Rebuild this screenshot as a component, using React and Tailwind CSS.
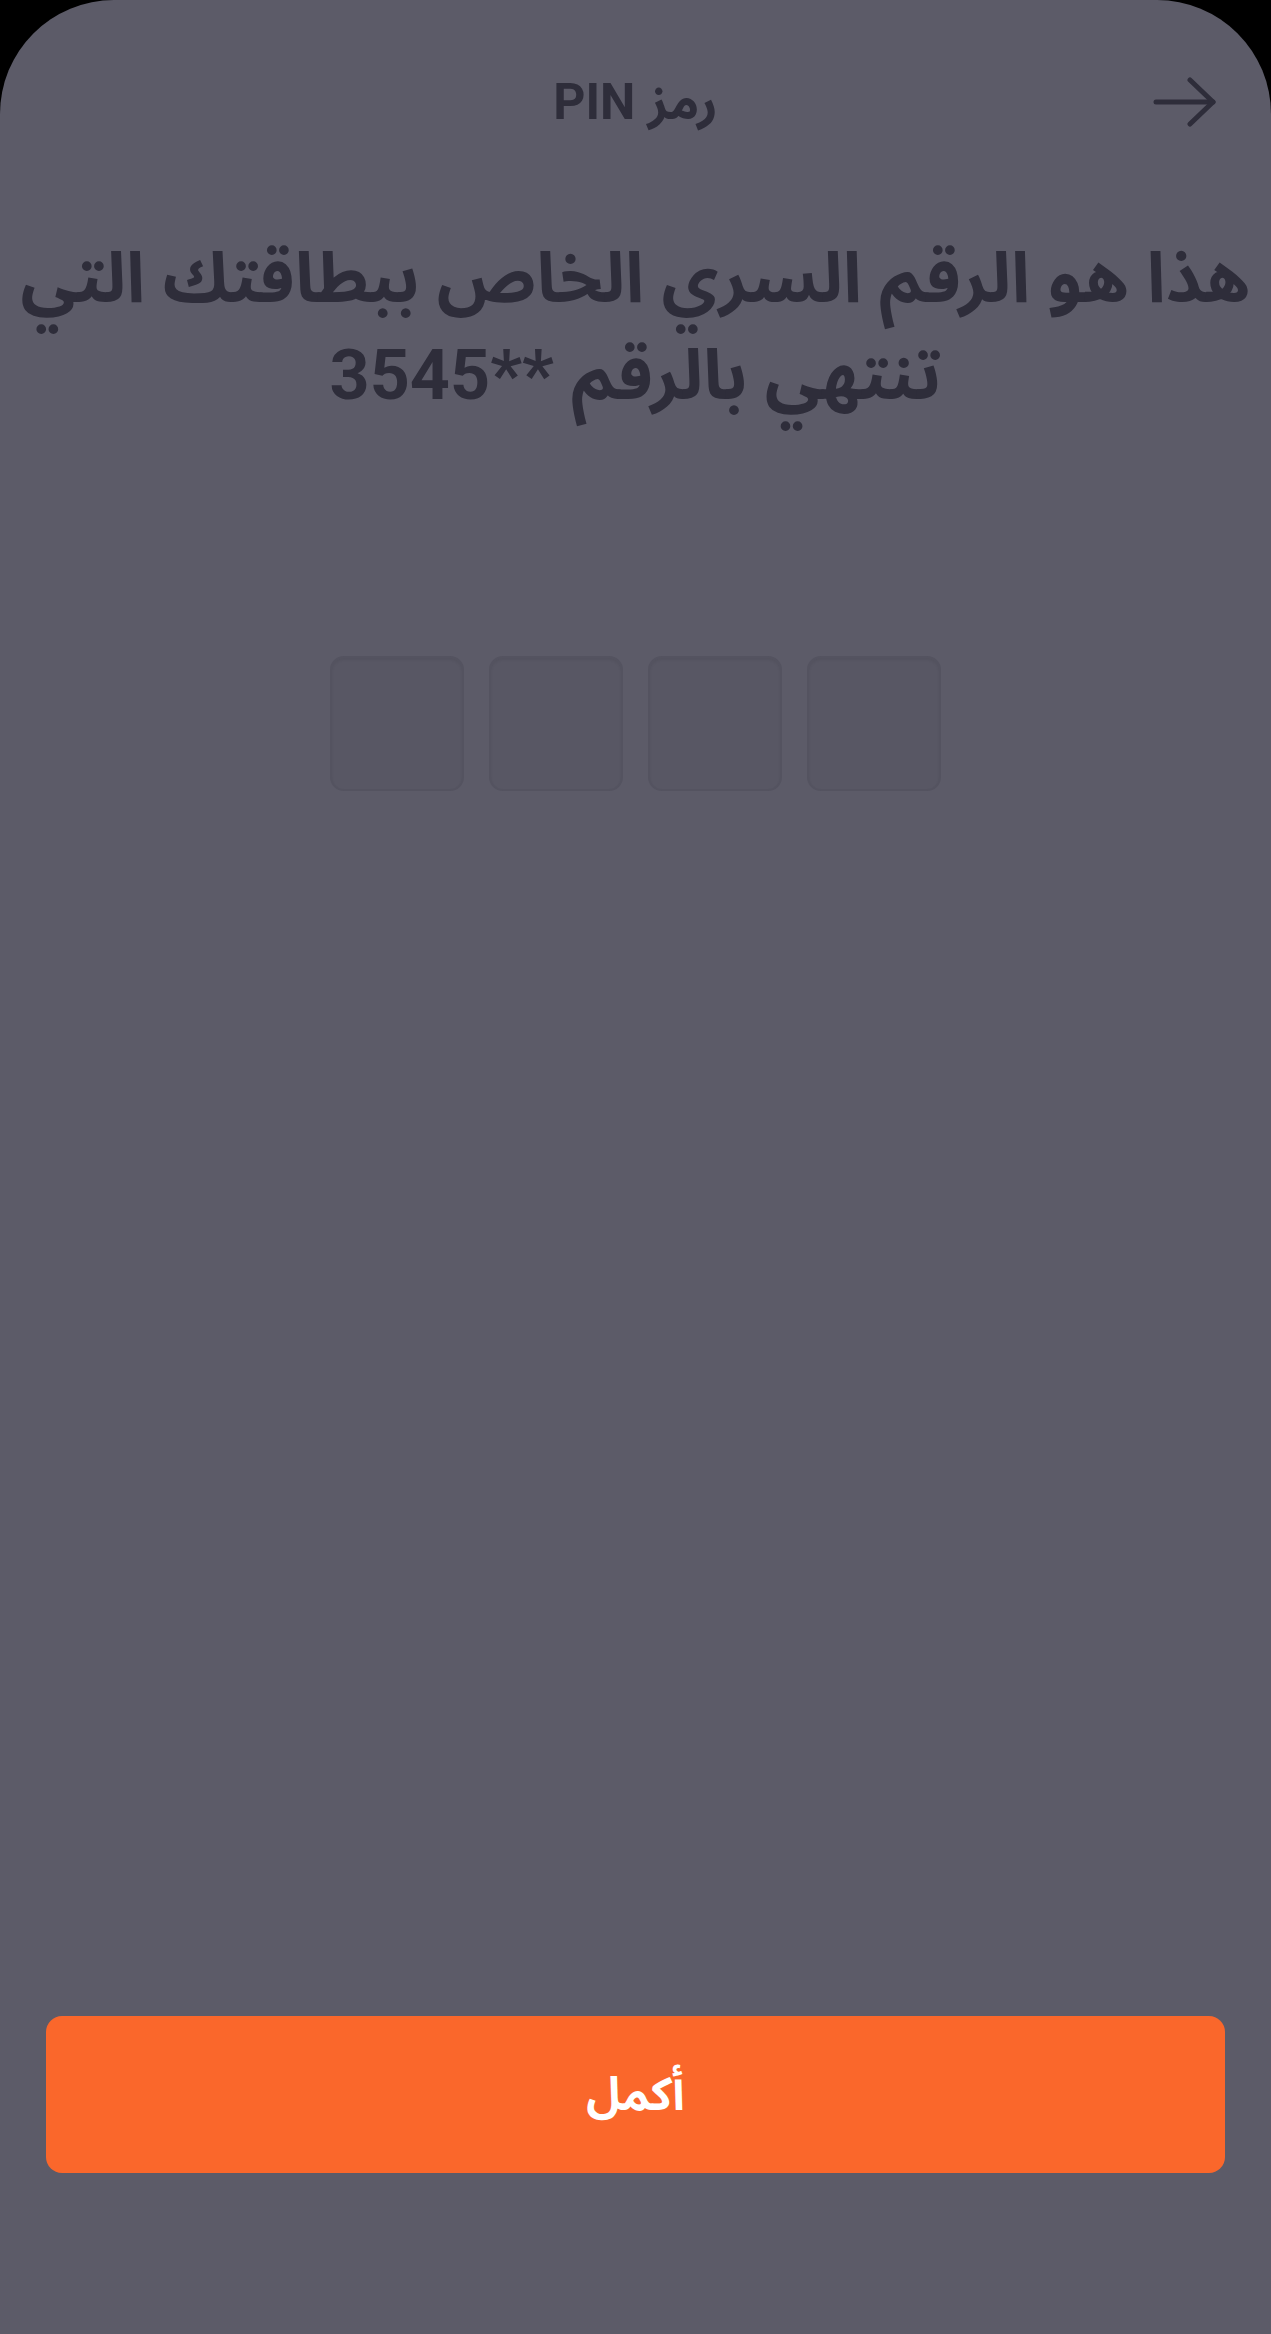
import React from "react";

export default function App() {
  const font = { fontFamily: 'Roboto, "Noto Sans Arabic", "DejaVu Sans", sans-serif' };
  return (
    <div className="w-[1271px] h-[2334px] bg-black" style={font}>
      <div dir="rtl" className="h-full bg-[#5c5b68] rounded-t-[114px] flex flex-col">
        {/* Header */}
        <div className="grid grid-cols-[1fr_auto_1fr] items-center pt-[58px] h-[146px]">
          <div className="flex justify-start pr-[54px]">
            <svg width="64" height="50" viewBox="0 0 64 50" fill="none" stroke="#2e2d3a" strokeWidth="5" strokeLinecap="round" strokeLinejoin="round">
              <path d="M3 25 H60" />
              <path d="M37 3 L60 25 L37 47" />
            </svg>
          </div>
          <div className="text-[50px] font-bold text-[#2e2d3a] leading-none">رمز PIN</div>
          <div />
        </div>

        {/* Heading */}
        <div className="mt-[84px] px-[4px] text-center text-[70px] leading-[97px] font-bold text-[#2e2d3a] whitespace-nowrap">
          هذا هو الرقم السري الخاص ببطاقتك التي
          <br />
          تنتهي بالرقم **3545
        </div>

        {/* PIN boxes */}
        <div className="mt-[232px] flex justify-center gap-[25px]">
          {[0, 1, 2, 3].map((i) => (
            <div
              key={i}
              className="w-[134px] h-[135px] rounded-[14px] bg-[#585764] border-2 border-[#545360] shadow-[inset_0_2px_3px_rgba(0,0,0,0.06)]"
            />
          ))}
        </div>

        <div className="flex-1" />

        {/* Button */}
        <div className="px-[46px] pb-[161px]">
          <div className="h-[157px] rounded-[16px] bg-[#fa672b] flex items-center justify-center">
            <span className="text-white text-[46px] font-bold">أكمل</span>
          </div>
        </div>
      </div>
    </div>
  );
}
